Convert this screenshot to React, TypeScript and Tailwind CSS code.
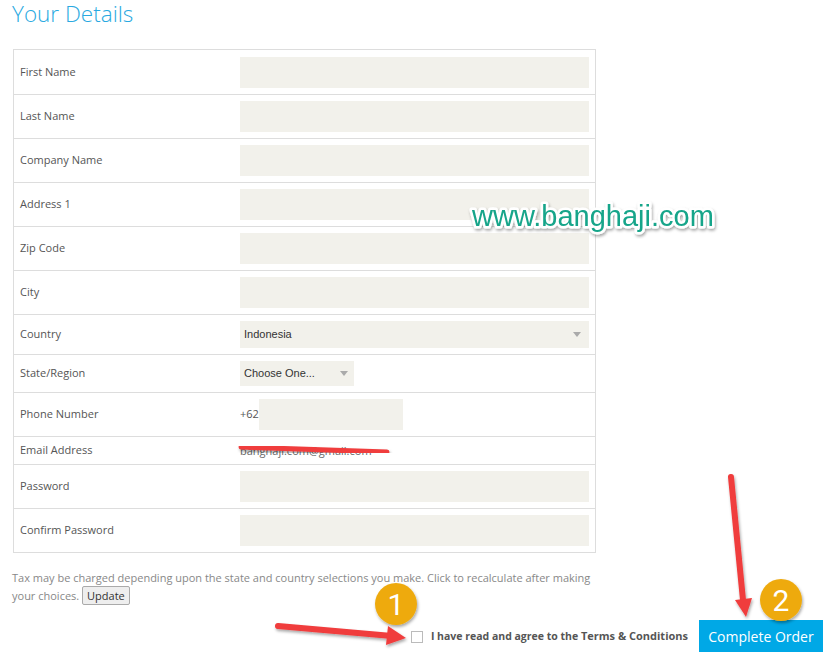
import React from "react";

const font = { fontFamily: '"Open Sans", "Liberation Sans", sans-serif' };

type Row = { label: string; h: string; kind: "text" | "country" | "state" | "phone" | "email" };

const rows: Row[] = [
  { label: "First Name", h: "h-[44px]", kind: "text" },
  { label: "Last Name", h: "h-[44px]", kind: "text" },
  { label: "Company Name", h: "h-[44px]", kind: "text" },
  { label: "Address 1", h: "h-[44px]", kind: "text" },
  { label: "Zip Code", h: "h-[44px]", kind: "text" },
  { label: "City", h: "h-[44px]", kind: "text" },
  { label: "Country", h: "h-[40px]", kind: "country" },
  { label: "State/Region", h: "h-[38px]", kind: "state" },
  { label: "Phone Number", h: "h-[44px]", kind: "phone" },
  { label: "Email Address", h: "h-[28px]", kind: "email" },
  { label: "Password", h: "h-[44px]", kind: "text" },
  { label: "Confirm Password", h: "h-[44px]", kind: "text" },
];

const Caret = () => (
  <svg width="8" height="5" viewBox="0 0 8 5" className="shrink-0">
    <path d="M0 0h8L4 5z" fill="#aaa" />
  </svg>
);

const Field = ({ kind }: { kind: Row["kind"] }) => {
  if (kind === "country")
    return (
      <div className="flex h-[27px] w-full items-center justify-between bg-[#f2f1eb] pl-[4px] pr-[8px] text-[11px] text-[#333]" style={{ fontFamily: '"Liberation Sans", Arial, sans-serif' }}>
        <span>Indonesia</span>
        <Caret />
      </div>
    );
  if (kind === "state")
    return (
      <div className="flex h-[25px] w-[114px] items-center justify-between bg-[#f2f1eb] pl-[4px] pr-[6px] text-[11px] text-[#333]" style={{ fontFamily: '"Liberation Sans", Arial, sans-serif' }}>
        <span>Choose One...</span>
        <Caret />
      </div>
    );
  if (kind === "phone")
    return (
      <div className="flex items-center text-[11px] text-[#555]">
        <span className="w-[19px]">+62</span>
        <div className="h-[31px] w-[144px] bg-[#f2f1eb]" />
      </div>
    );
  if (kind === "email")
    return <div className="pt-[2px] text-[11px] text-[#666]">banghaji.com@gmail.com</div>;
  return <div className="h-[31px] w-full bg-[#f2f1eb]" />;
};

export default function App() {
  return (
    <div className="relative h-[660px] w-[835px] overflow-hidden bg-white" style={font}>
      <h1 className="pl-[12px] text-[22.5px] font-light leading-[28px] text-[#29a9e1]">Your Details</h1>

      <div className="ml-[13px] mt-[21px] w-[583px] border border-[#dddddd]">
        {rows.map((r, i) => (
          <div key={r.label} className={`flex items-center ${r.h} ${i > 0 ? "border-t border-[#dddddd]" : ""}`}>
            <div className="w-[218px] shrink-0 pl-[6px] text-[11px] text-[#555]">{r.label}</div>
            <div className="flex flex-1 items-center pl-[8px] pr-[6px]">
              <Field kind={r.kind} />
            </div>
          </div>
        ))}
      </div>

      <p className="ml-[12px] mt-[17px] w-[584px] text-[11px] leading-[16px] text-[#888]">
        Tax may be charged depending upon the state and country selections you make. Click to recalculate after making your choices.{" "}
        <button className="rounded-[2px] border border-[#aaa] bg-[#eeeeee] px-[4px] text-[11px] leading-[17px] text-[#333]">Update</button>
      </p>

      <div className="mt-[15px] flex items-center justify-end pr-[12px]">
        <div className="mt-[1px] flex items-center">
          <span className="mr-[8px] h-[12px] w-[12px] border border-[#bbb] bg-white" />
          <span className="text-[10.5px] font-bold text-[#555]">
            I have read and agree to the <span className="text-[11px]">Terms &amp; Conditions</span>
          </span>
        </div>
        <button className="ml-[11px] h-[32px] w-[124px] bg-[#00a8e6] text-[14px] text-white">Complete Order</button>
      </div>

      {/* annotations */}
      <svg className="pointer-events-none absolute left-0 top-0" width="835" height="660">
        <defs>
          <filter id="sh" x="-20%" y="-20%" width="140%" height="140%">
            <feDropShadow dx="1" dy="2" stdDeviation="1.5" floodColor="#000" floodOpacity="0.35" />
          </filter>
        </defs>
        <line x1="241" y1="447" x2="387" y2="452" stroke="#f03c3c" strokeWidth="5" strokeLinecap="round" filter="url(#sh)" />
        <g filter="url(#sh)">
          <line x1="278" y1="626" x2="392" y2="636" stroke="#f03c3c" strokeWidth="6" strokeLinecap="round" />
          <path d="M388 626 L406 638 L386 645 Z" fill="#f03c3c" />
          <line x1="731" y1="477" x2="743" y2="600" stroke="#f03c3c" strokeWidth="6" strokeLinecap="round" />
          <path d="M735 600 L746 617 L752 598 Z" fill="#f03c3c" />
          <circle cx="396" cy="604" r="21" fill="#eeaa10" />
          <circle cx="781" cy="600" r="21" fill="#eeaa10" />
        </g>
        <text x="396" y="615" textAnchor="middle" fontSize="30" fill="#fff" fontFamily="Roboto, sans-serif">1</text>
        <text x="781" y="611" textAnchor="middle" fontSize="30" fill="#fff" fontFamily="Roboto, sans-serif">2</text>
        <text
          x="472"
          y="226"
          fontSize="29"
          fontFamily='"Liberation Sans", Arial, sans-serif'
          fill="#17a58a"
          stroke="#fff"
          strokeWidth="5"
          strokeLinejoin="round"
          paintOrder="stroke"
          filter="url(#sh)"
        >
          www.banghaji.com
        </text>
      </svg>
    </div>
  );
}
